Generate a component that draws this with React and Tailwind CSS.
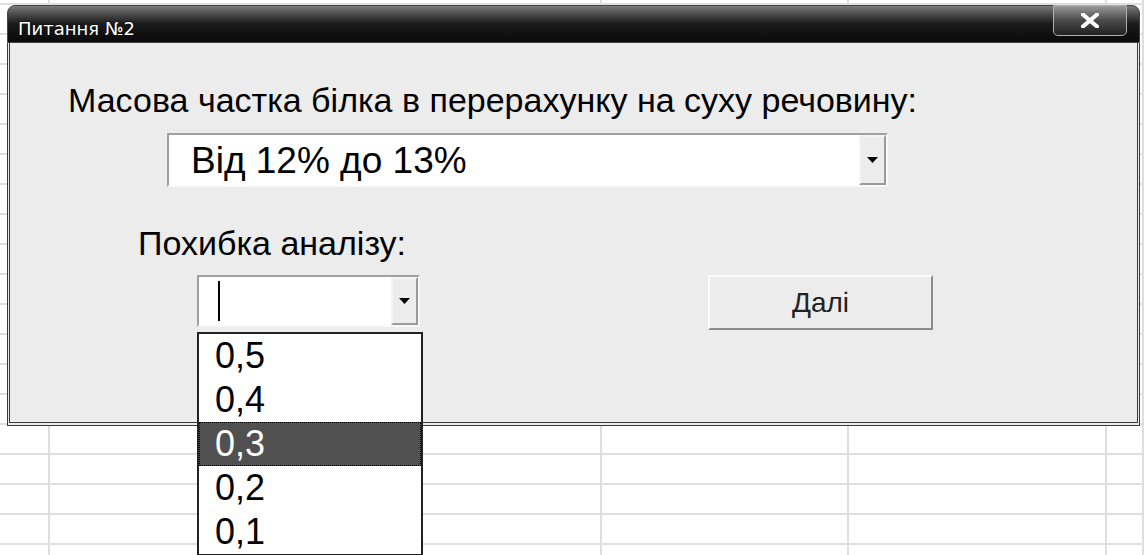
import React from 'react';

const font = { fontFamily: '"Liberation Sans", Arial, sans-serif' };

// spreadsheet behind the dialog
const colClasses = ['w-[50px]', 'w-[552px]', 'w-[247px]', 'w-[258px]', 'flex-1'];
const rowClasses = ['h-[5px]', ...Array.from({ length: 19 }, () => 'h-[30px]')];

const Sheet = () => (
  <div className="flex flex-col">
    {rowClasses.map((rc, r) => (
      <div key={r} className={`flex box-border border-b-2 border-[#dedede] ${rc}`}>
        {colClasses.map((cc, c) => (
          <div key={c} className={`box-border border-r-2 border-[#dedede] ${cc}`} />
        ))}
      </div>
    ))}
  </div>
);

const DropButton = () => (
  <div className="flex w-[27px] shrink-0 items-center justify-center border-2 border-t-[#f4f4f4] border-l-[#f4f4f4] border-b-[#9a9a9a] border-r-[#9a9a9a] bg-[#ececec]">
    <svg width="11" height="6" viewBox="0 0 11 6">
      <path d="M0 0h11L5.5 6z" fill="#000" />
    </svg>
  </div>
);

const items = ['0,5', '0,4', '0,3', '0,2', '0,1'];

export default function App() {
  return (
    <div className="relative h-[555px] w-[1144px] overflow-hidden bg-white" style={font}>
      <Sheet />

      {/* dialog window */}
      <div className="absolute left-[7px] top-[5px] flex h-[421px] w-[1133px] flex-col">
        <div className="flex h-[38px] items-start justify-between rounded-tl-[8px] rounded-tr-[8px] border border-[#444] bg-gradient-to-b from-[#7a7a7a] via-[#1a1a1a] to-[#0a0a0a] pl-[10px] pr-[12px]">
          <span className="mt-[12px] text-[18px] leading-[22px] text-white [text-shadow:0_0_2px_#000]" style={{ fontFamily: '"DejaVu Sans", sans-serif' }}>
            Питання №2
          </span>
          <div className="-mt-px flex h-[31px] w-[74px] items-center justify-center rounded-b-[5px] border border-[#b0b0b0] bg-gradient-to-b from-[#9a9a9a] via-[#4a4a4a] to-[#222]">
            <svg width="18" height="15" viewBox="0 0 18 15">
              <path d="M2 1.5l14 12M16 1.5l-14 12" stroke="#fff" strokeWidth="4" strokeLinecap="square" />
            </svg>
          </div>
        </div>

        <div className="flex flex-1 flex-col border-x-[3px] border-b-[4px] border-[#3a3a3a] border-double bg-[#ececec]">
          <p className="ml-[58px] mt-[37px] text-[34px] leading-[40px] text-black">
            Масова частка білка в перерахунку на суху речовину:
          </p>

          <div className="ml-[157px] mt-[13px] flex h-[54px] w-[721px] border-2 border-t-[#a0a0a0] border-l-[#a0a0a0] border-b-[#f8f8f8] border-r-[#f8f8f8] bg-white">
            <div className="flex flex-1 items-center pl-[22px] text-[37px] leading-none text-black">Від 12% до 13%</div>
            <DropButton />
          </div>

          <p className="ml-[128px] mt-[36px] text-[34px] leading-[40px] text-black">Похибка аналізу:</p>

          <div className="mt-[12px] flex items-start">
            <div className="relative ml-[187px] w-[223px]">
              <div className="flex h-[52px] border-2 border-t-[#a0a0a0] border-l-[#a0a0a0] border-b-[#f8f8f8] border-r-[#f8f8f8] bg-white">
                <div className="flex flex-1 items-center pl-[19px]">
                  <div className="h-[40px] w-[2px] bg-black" />
                </div>
                <DropButton />
              </div>

              {/* open list */}
              <div className="absolute left-0 top-full z-10 mt-[5px] w-[226px] border-2 border-[#222] bg-white">
                {items.map((v) => (
                  <div
                    key={v}
                    className={
                      v === '0,3'
                        ? 'flex h-[44px] items-center border border-dotted border-white bg-[#505050] pl-[15px] text-[36px] text-white outline outline-1 outline-dotted outline-black -outline-offset-1'
                        : 'flex h-[44px] items-center pl-[16px] text-[36px] text-black'
                    }
                  >
                    {v}
                  </div>
                ))}
              </div>
            </div>

            <button className="ml-[288px] flex h-[55px] w-[225px] items-center justify-center border-2 border-t-[#fafafa] border-l-[#fafafa] border-b-[#8a8a8a] border-r-[#8a8a8a] bg-[#ececec] text-[28px] text-[#222]">
              Далі
            </button>
          </div>
        </div>
      </div>
    </div>
  );
}
